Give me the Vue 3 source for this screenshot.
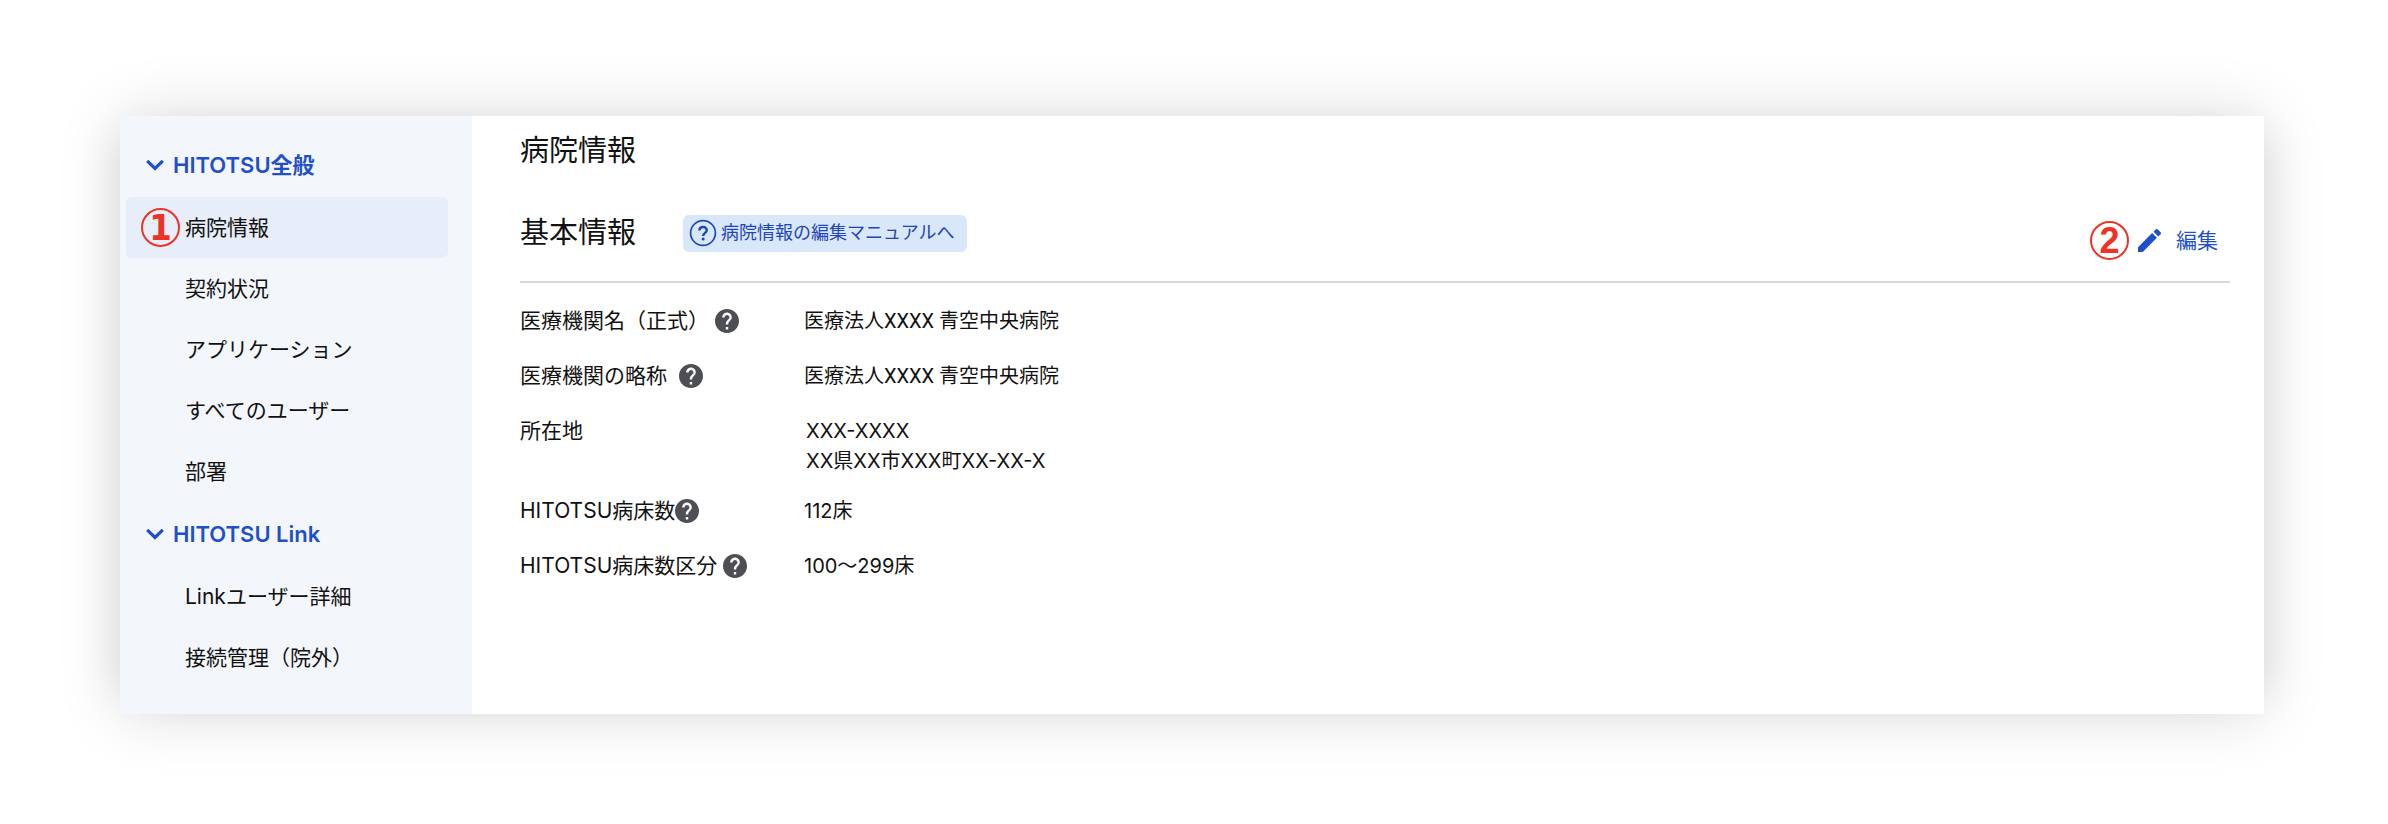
<script setup>
const groups = [
  {
    name: 'HITOTSU全般',
    items: [
      { label: '病院情報', active: true, marker: '1' },
      { label: '契約状況' },
      { label: 'アプリケーション' },
      { label: 'すべてのユーザー' },
      { label: '部署' },
    ],
  },
  {
    name: 'HITOTSU Link',
    items: [{ label: 'Linkユーザー詳細' }, { label: '接続管理（院外）' }],
  },
]

const rows = [
  { label: '医療機関名（正式）', help: true, gap: 'near', kind: 'name', lines: ['医療法人XXXX 青空中央病院'] },
  { label: '医療機関の略称', help: true, gap: 'wide', kind: 'name', lines: ['医療法人XXXX 青空中央病院'] },
  { label: '所在地', kind: 'address', lines: ['XXX-XXXX', 'XX県XX市XXX町XX-XX-X'] },
  { label: 'HITOTSU病床数', help: true, gap: 'none', lines: ['112床'] },
  { label: 'HITOTSU病床数区分', help: true, gap: 'near', lines: ['100〜299床'] },
]
</script>

<template>
  <div class="page">
    <div class="card">
      <nav class="sidebar" aria-label="設定メニュー">
        <section v-for="group in groups" :key="group.name">
          <button class="group" type="button" aria-expanded="true">
            <svg class="chevron" viewBox="0 0 18 12" aria-hidden="true">
              <path d="M1.2 1.8 L9 9.5 L16.8 1.8" fill="none" stroke="currentColor" stroke-width="3.2" />
            </svg>
            <span>{{ group.name }}</span>
          </button>
          <a
            v-for="item in group.items"
            :key="item.label"
            href="#"
            class="item"
            :class="{ active: item.active }"
          >
            <span class="slot">
              <span v-if="item.marker" class="marker one">{{ item.marker }}</span>
            </span>
            <span>{{ item.label }}</span>
          </a>
        </section>
      </nav>

      <main class="content">
        <h1>病院情報</h1>
        <header class="section-head">
          <div class="heading">
            <h2>基本情報</h2>
            <a class="manual" href="#">
              <svg class="manual-icon" viewBox="0 0 28 28" aria-hidden="true">
                <circle cx="14" cy="14" r="12.4" fill="none" stroke="currentColor" stroke-width="1.7" />
                <path d="M10.4 11.5 C10.5 6.8 18 7 17.8 11.3 C17.7 13.8 14.1 14.1 14.1 17" fill="none" stroke="currentColor" stroke-width="2.4" />
                <circle cx="14.1" cy="20" r="1.5" fill="currentColor" />
              </svg>
              <span>病院情報の編集マニュアルへ</span>
            </a>
          </div>
          <div class="actions">
            <span class="marker two">2</span>
            <button class="edit" type="button">
              <svg class="pencil" viewBox="3 3 18 18" aria-hidden="true">
                <path fill="currentColor" d="M3 17.25V21h3.75L17.81 9.94l-3.75-3.75L3 17.25zM20.71 7.04a1 1 0 0 0 0-1.41l-2.34-2.34a1 1 0 0 0-1.41 0l-1.83 1.83 3.75 3.75 1.83-1.83z" />
              </svg>
              <span>編集</span>
            </button>
          </div>
        </header>

        <dl class="details">
          <div v-for="row in rows" :key="row.label" class="row">
            <dt :class="row.gap">
              <span>{{ row.label }}</span>
              <button v-if="row.help" class="help" type="button" :aria-label="row.label + 'の説明'">
                <svg viewBox="2 2 20 20" aria-hidden="true">
                  <path fill="currentColor" d="M12 2C6.48 2 2 6.48 2 12s4.48 10 10 10 10-4.48 10-10S17.52 2 12 2zm1 17h-2v-2h2v2zm2.07-7.75l-.9.92C13.45 12.9 13 13.5 13 15h-2v-.5c0-1.1.45-2.1 1.17-2.83l1.24-1.26c.37-.36.59-.86.59-1.41 0-1.1-.9-2-2-2s-2 .9-2 2H8c0-2.21 1.79-4 4-4s4 1.79 4 4c0 .88-.36 1.68-.93 2.25z" />
                </svg>
              </button>
            </dt>
            <dd :class="row.kind">
              <div v-for="line in row.lines" :key="line">{{ line }}</div>
            </dd>
          </div>
        </dl>
      </main>
    </div>
  </div>
</template>

<style>
body {
  margin: 0;
  background: #fff;
}
</style>

<style scoped>
.page {
  padding: 116px 124px 110px 120px;
  font-family: Inter, "Noto Sans CJK JP", sans-serif;
  font-size: 21px;
  line-height: 30px;
  color: #111;
}
.card {
  display: flex;
  background: #fff;
  box-shadow:
    0 0 60px rgba(0, 0, 0, 0.14),
    -24px 0 40px -24px rgba(0, 0, 0, 0.08),
    24px 0 40px -24px rgba(0, 0, 0, 0.08);
}
button {
  margin: 0;
  padding: 0;
  border: 0;
  background: none;
  font: inherit;
  cursor: pointer;
}
a {
  color: inherit;
  text-decoration: none;
}
.sidebar {
  flex: 0 0 352px;
  box-sizing: border-box;
  padding: 17px 24px 26px 6px;
  background: #f3f6fb;
}
.group {
  display: flex;
  align-items: center;
  gap: 9px;
  width: 100%;
  height: 64px;
  padding-left: 20px;
  color: #1f50c8;
  font-size: 22px;
  font-weight: 600;
}
.chevron {
  width: 18px;
  height: 12px;
}
.item {
  display: flex;
  align-items: center;
  height: 61px;
  border-radius: 6px;
}
.item.active {
  background: #e7edf9;
}
.slot {
  flex: 0 0 59px;
  box-sizing: border-box;
  padding-left: 15px;
}
.marker {
  display: flex;
  align-items: center;
  justify-content: center;
  box-sizing: border-box;
  width: 39px;
  height: 39px;
  border: 2px solid #ee3224;
  border-radius: 50%;
  color: #ee3224;
  font-weight: 700;
  font-size: 36px;
  line-height: 36px;
}
.one {
  font-family: "DejaVu Sans Condensed", "DejaVu Sans", sans-serif;
}
.two {
  font-family: "Liberation Sans", sans-serif;
}
.content {
  flex: 1;
  min-width: 0;
  padding: 13px 34px 0 48px;
}
h1,
h2 {
  margin: 0;
  font-size: 29px;
  line-height: 44px;
  font-weight: 400;
}
.section-head {
  display: flex;
  align-items: flex-end;
  justify-content: space-between;
  padding: 33px 12px 21px 0;
  border-bottom: 2px solid #d8d8de;
}
.heading {
  display: flex;
  align-items: center;
  gap: 47px;
  height: 54px;
}
.manual {
  display: flex;
  align-items: center;
  gap: 4px;
  box-sizing: border-box;
  height: 37px;
  padding: 0 13px 0 6px;
  border-radius: 6px;
  background: #d9e7fa;
  color: #1d46b8;
  font-size: 18px;
}
.manual-icon {
  width: 28px;
  height: 28px;
}
.actions,
.edit {
  display: flex;
  align-items: center;
}
.actions {
  gap: 9px;
}
.edit {
  gap: 15px;
  color: #1f50c8;
}
.pencil {
  width: 23px;
  height: 23px;
}
.details {
  margin: 0;
  padding-top: 11px;
}
.row {
  display: grid;
  grid-template-columns: 284px 1fr;
  box-sizing: border-box;
  min-height: 55px;
  padding: 12px 0 8px;
}
dt {
  display: flex;
  align-items: center;
  height: 30px;
}
.near {
  gap: 6px;
}
.wide {
  gap: 12px;
}
dd {
  margin: 0;
  font-size: 20px;
}
.name {
  font-family: Roboto, "Noto Sans CJK JP", sans-serif;
}
.address {
  padding-left: 2px;
}
.help {
  display: flex;
  width: 24px;
  height: 24px;
  color: #4e4e55;
}
.help svg {
  width: 24px;
  height: 24px;
}
</style>
